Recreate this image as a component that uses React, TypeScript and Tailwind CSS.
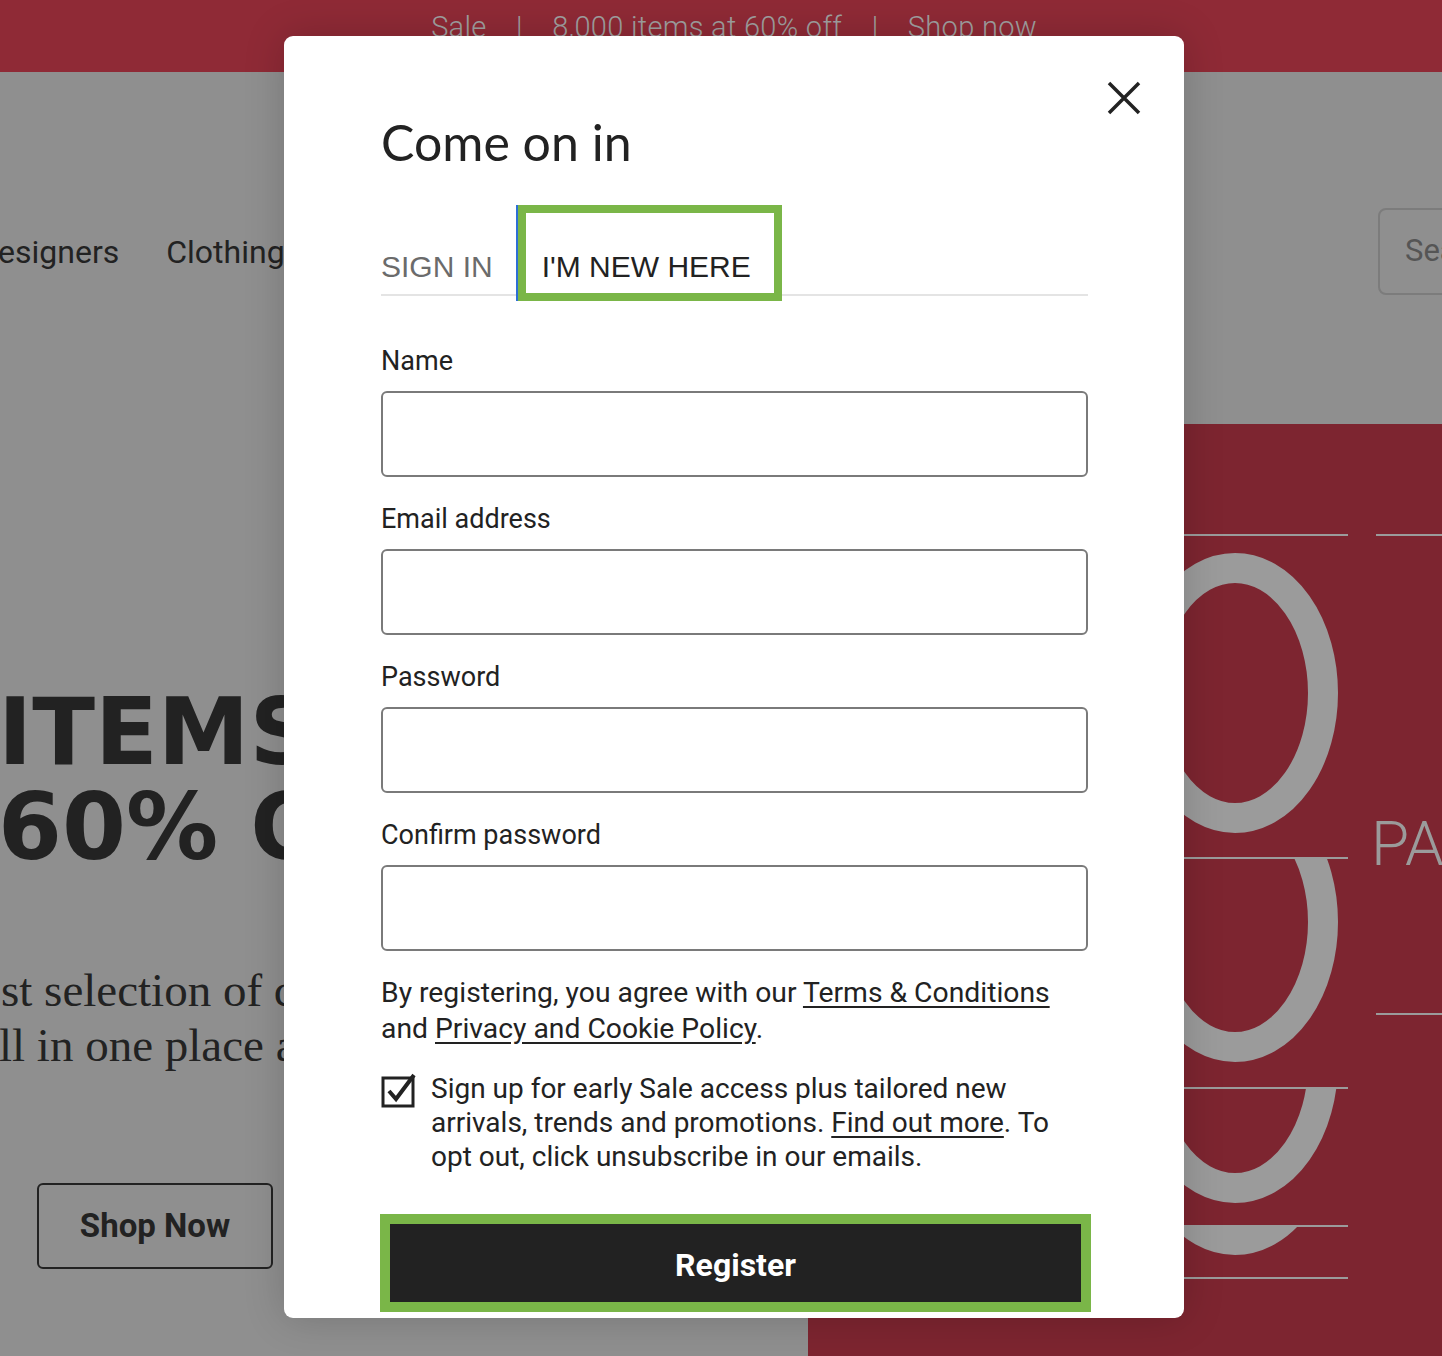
const fields = ["Name", "Email address", "Password", "Confirm password"];

function SaleArt() {
  // stacked split "0" digits behind the lines, as in the hero picture
  const ring = "#9b9b9b";
  const segs = [
    { y0: 111, y1: 434, cy: 269 },
    { y0: 434, y1: 664, cy: 498 },
    { y0: 664, y1: 802, cy: 639 },
    { y0: 802, y1: 854, cy: 691 },
  ];
  return (
    <svg width="634" height="932" viewBox="0 0 634 932" className="block">
      <defs>
        {segs.map((s, i) => (
          <clipPath key={i} id={`seg${i}`}>
            <rect x="0" y={s.y0} width="560" height={s.y1 - s.y0} />
          </clipPath>
        ))}
      </defs>
      {segs.map((s, i) => (
        <g key={i} clipPath={`url(#seg${i})`}>
          <ellipse cx="427" cy={s.cy} rx="88" ry="125" fill="none" stroke={ring} strokeWidth="30" />
        </g>
      ))}
      <g stroke={ring} strokeWidth="2">
        <line x1="0" y1="111" x2="540" y2="111" />
        <line x1="568" y1="111" x2="634" y2="111" />
        <line x1="0" y1="434" x2="540" y2="434" />
        <line x1="568" y1="590" x2="634" y2="590" />
        <line x1="0" y1="664" x2="540" y2="664" />
        <line x1="0" y1="802" x2="540" y2="802" />
        <line x1="0" y1="854" x2="540" y2="854" />
      </g>
      <text x="563" y="441" fill={ring} fontSize="62" fontFamily="Roboto, sans-serif" fontWeight="300">
        PA
      </text>
    </svg>
  );
}

function CheckIcon() {
  return (
    <svg width="36" height="36" viewBox="0 0 36 36" className="shrink-0">
      <rect x="2" y="6" width="30" height="28" fill="none" stroke="#222" strokeWidth="3" />
      <path d="M8 19 L15 27 L33 3" fill="none" stroke="#222" strokeWidth="4" strokeLinejoin="miter" />
    </svg>
  );
}

export default function App() {
  return (
    <div className="relative w-full h-[1356px] overflow-hidden bg-[#8f8f8f] font-['Roboto',sans-serif] text-[#222]">
      {/* Page behind the dialog */}
      <div className="h-[72px] bg-[#8f2a36] flex justify-center pl-[26px] pt-[8px]">
        <p className="text-[29px] leading-[38px] font-light text-[#a0a0a0] whitespace-pre tracking-[0.3px]">
          {"Sale    |    8,000 items at 60% off    |    Shop now"}
        </p>
      </div>

      <div className="h-[352px] pt-[136px]">
        <div className="flex items-center h-[87px]">
          <span className="text-[32px] -ml-[23px]">Designers</span>
          <span className="text-[32px] ml-[47px]">Clothing</span>
          <div className="ml-auto w-[120px] -mr-[56px] h-[87px] border-2 border-[#7c7c7c] rounded-[8px] flex items-center pl-[25px]">
            <span className="text-[31px] text-[#555]">Search</span>
          </div>
        </div>
      </div>

      <div className="flex h-[932px]">
        <div className="w-[808px] flex flex-col">
          <div className="mt-[261px] font-['DejaVu_Sans',sans-serif] font-bold text-[92px] leading-[95px] whitespace-nowrap">
            <p className="-ml-[2px]">ITEMS AT</p>
            <p className="-ml-[2px]">60% OFF</p>
          </div>
          <div className="mt-[88px] font-['Liberation_Serif',serif] text-[47px] leading-[55px] whitespace-nowrap">
            <p className="ml-[1px]">st selection of clothing</p>
            <p className="-ml-[1px]">ll in one place at up to 60% off</p>
          </div>
          <button className="mt-[110px] ml-[37px] w-[236px] h-[86px] border-2 border-[#222] rounded-[6px] text-[33px] font-bold">
            Shop Now
          </button>
        </div>
        <div className="flex-1 bg-[#7d2530]">
          <SaleArt />
        </div>
      </div>

      {/* Dialog */}
      <div className="absolute left-[284px] top-[36px] w-[900px] h-[1282px] bg-white rounded-[9px] shadow-[0_0_40px_rgba(0,0,0,0.18)] pl-[97px] pr-[96px]">
        <button className="absolute left-[822px] top-[44px]">
          <svg width="36" height="36" viewBox="0 0 36 36">
            <path d="M3 3 L33 33 M33 3 L3 33" stroke="#222" strokeWidth="3.5" fill="none" />
          </svg>
        </button>

        <h2 className="pt-[76px] text-[50px] leading-[60px] font-['Lato',sans-serif] text-[#222]">Come on in</h2>

        <div className="mt-[33px] flex items-end border-b-2 border-[#e4e4e4] font-['Liberation_Sans',Arial,sans-serif] text-[30px] leading-[34px]">
          <span className="pb-[10px] text-[#6b6b6b]">SIGN IN</span>
          <div className="ml-[25px] -mb-[7px] border-[8px] border-[#7ab648] pt-[37px] pb-[9px] pl-[16px] pr-[23px] bg-white shadow-[-2px_0_0_#2d6fd6]">
            <span className="text-[#222]">I'M NEW HERE</span>
          </div>
        </div>

        <div className="mt-[49px] flex flex-col gap-[26px]">
          {fields.map((f) => (
            <div key={f} className="flex flex-col">
              <label className="text-[27px] leading-[32px] mb-[14px]">{f}</label>
              <div className="h-[86px] border-2 border-[#7a7a7a] rounded-[6px]" />
            </div>
          ))}
        </div>

        <p className="mt-[24px] text-[28.3px] leading-[36px]">
          By registering, you agree with our <span className="underline underline-offset-4">Terms &amp; Conditions</span>
          <br />
          and <span className="underline underline-offset-4">Privacy and Cookie Policy</span>.
        </p>

        <div className="mt-[25px] flex gap-[14px]">
          <CheckIcon />
          <p className="text-[28px] leading-[34px]">
            Sign up for early Sale access plus tailored new
            <br />
            arrivals, trends and promotions. <span className="underline underline-offset-4">Find out more</span>. To
            <br />
            opt out, click unsubscribe in our emails.
          </p>
        </div>

        <div className="mt-[40px] -ml-[1px] w-[711px] border-[10px] border-[#7ab648]">
          <button className="w-full h-[78px] bg-[#222] text-white text-[32px] font-bold pt-[4px]">Register</button>
        </div>
      </div>
    </div>
  );
}
